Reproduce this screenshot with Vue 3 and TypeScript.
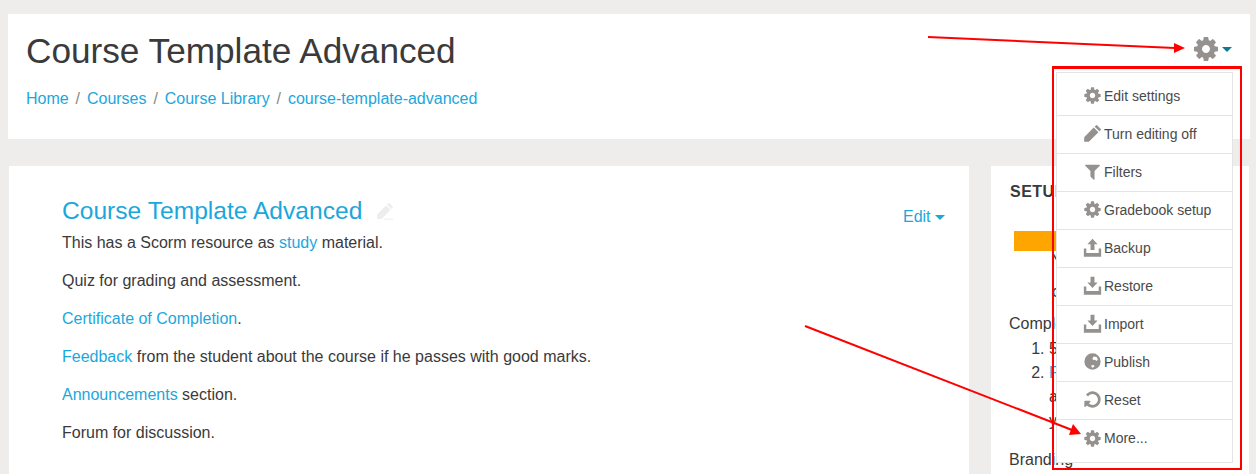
<script setup lang="ts">
const cog = 'M1152 896q0-106-75-181t-181-75-181 75-75 181 75 181 181 75 181-75 75-181zm512-109v222q0 12-8 23t-20 13l-185 28q-19 54-39 91 35 50 107 138 10 12 10 25t-9 23q-27 37-99 108t-94 71q-12 0-26-9l-138-108q-44 23-91 38-16 136-29 186-7 28-36 28h-222q-14 0-24.500-8.500t-11.500-21.500l-28-184q-49-16-90-37l-141 107q-10 9-25 9-14 0-25-11-126-114-165-168-7-10-7-23 0-12 8-23 15-21 51-66.500t54-70.500q-27-50-41-99l-183-27q-13-2-21-12.500t-8-23.500v-222q0-12 8-23t19-13l186-28q14-46 39-92-40-57-107-138-10-12-10-24 0-10 9-23 26-36 98.500-107.500t94.500-71.500q13 0 26 10l138 107q44-23 91-38 16-136 29-186 7-28 36-28h222q14 0 24.500 8.500t11.500 21.500l28 184q49 16 90 37l142-107q9-9 24-9 13 0 25 10 129 119 165 170 7 8 7 22 0 12-8 23-15 21-51 66.500t-54 70.500q26 50 41 98l183 28q13 2 21 12.500t8 23.500z'
const pencil = 'M1330 120l342 342q50 50 0 100l-130 130-442-442 130-130q50-50 100 0zM1010 340l442 442-900 900H110v-442z'
const filter = 'M1595 295q17 41-14 70l-493 493v742q0 42-39 59-13 5-25 5-27 0-45-19l-256-256q-19-19-19-45v-486l-493-493q-31-29-14-70 17-39 59-39h1280q42 0 59 39z'
const upload = 'M80 1000h230v420h1172v-420h230v780H80zM896 60l480 520H1080v560H712V580H416z'
const download = 'M80 1000h230v420h1172v-420h230v780H80zM712 60h368v560h296l-480 520-480-520h296z'
const globe = 'M896 128a768 768 0 1 0 0 1536a768 768 0 0 0 0-1536zM1000 420l300 60 100 250-140 120-120-120-180 30-80-150zM800 1250l220-30 60 130-150 130-130-60z'
const repeat = 'M1664 256v448q0 26-19 45t-45 19h-448q-42 0-59-40-17-39 14-69l138-138q-148-137-349-137-104 0-198.500 40.500t-163.500 109.500-109.500 163.500-40.500 198.500 40.500 198.500 109.500 163.500 163.500 109.500 198.500 40.500q119 0 225-52t179-147q7-10 23-12 15 0 25 9l137 138q9 8 9.500 20.500t-7.500 22.500q-109 132-264 204.500t-327 72.500q-156 0-298-61t-245-164-164-245-61-298 61-298 164-245 245-164 298-61q147 0 284.500 55.500t244.500 156.500l130-129q29-31 70-14 39 17 39 59z'

const crumbs = ['Home', 'Courses', 'Course Library', 'course-template-advanced']
const menu = [
  { label: 'Edit settings', d: cog, flip: false },
  { label: 'Turn editing off', d: pencil, flip: false },
  { label: 'Filters', d: filter, flip: false },
  { label: 'Gradebook setup', d: cog, flip: false },
  { label: 'Backup', d: upload, flip: false },
  { label: 'Restore', d: download, flip: false },
  { label: 'Import', d: download, flip: false },
  { label: 'Publish', d: globe, flip: false },
  { label: 'Reset', d: repeat, flip: true },
  { label: 'More...', d: cog, flip: false }
]
</script>

<template>
  <div class="page">
    <header class="head card">
      <div class="head-main">
        <h1>Course Template Advanced</h1>
        <nav class="crumbs">
          <template v-for="(c, i) in crumbs" :key="c">
            <span v-if="i" class="sep">/</span>
            <a>{{ c }}</a>
          </template>
        </nav>
      </div>
      <div class="cogbtn">
        <svg width="28" height="28" viewBox="0 0 1792 1792"><path :d="cog" fill="#94918e" /></svg>
        <i class="caret teal"></i>
      </div>
    </header>

    <div class="cols">
      <main class="course card">
        <div class="title-row">
          <h2>Course Template Advanced</h2>
          <svg class="edit-pen" width="18" height="18" viewBox="0 0 1792 1792"><path :d="pencil" fill="#eeedec" /><rect x="800" y="1660" width="900" height="100" fill="#eeedec" /></svg>
          <a class="edit">Edit <i class="caret blue"></i></a>
        </div>
        <p>This has a Scorm resource as <a>study</a> material.</p>
        <p>Quiz for grading and assessment.</p>
        <p><a>Certificate of Completion</a>.</p>
        <p><a>Feedback</a> from the student about the course if he passes with good marks.</p>
        <p><a>Announcements</a> section.</p>
        <p>Forum for discussion.</p>
      </main>
      <aside class="side card">
        <h3>SETUP</h3>
        <div class="orange"></div>
        <p class="mid">Your</p>
        <p class="mid low">course</p>
        <p class="comp">Completion</p>
        <ol>
          <li>50%</li>
          <li><a>Feed</a><br />and<br />you</li>
        </ol>
        <p class="brand">Branding</p>
      </aside>
    </div>

    <ul class="menu">
      <li v-for="m in menu" :key="m.label">
        <svg width="19" height="19" viewBox="0 0 1792 1792">
          <path :d="m.d" fill="#94918e" fill-rule="evenodd" :transform="m.flip ? 'rotate(180 896 896)' : undefined" />
        </svg>
        <span>{{ m.label }}</span>
      </li>
    </ul>
    <div class="redbox"></div>

    <svg class="arrows" width="1256" height="474" viewBox="0 0 1256 474">
      <line x1="928" y1="37" x2="1175" y2="48" stroke="#f00" stroke-width="2" />
      <polygon points="1185,48 1174,43 1174,53" fill="#f00" />
      <line x1="805" y1="326" x2="1072" y2="430" stroke="#f00" stroke-width="2" />
      <polygon points="1081,434 1069,435 1073,424" fill="#f00" />
    </svg>
  </div>
</template>

<style>
html, body { margin: 0; background: #eeedec; }
</style>

<style scoped>
.page {
  position: relative;
  width: 1256px;
  height: 474px;
  overflow: hidden;
  padding: 14px 6px 0 8px;
  box-sizing: border-box;
  font-family: "Liberation Sans", Arial, sans-serif;
  font-size: 14.5px;
  color: #3a3a3a;
}
a { color: #1ba7dc; }
.card { background: #fff; }
.head {
  height: 125px;
  display: flex;
  justify-content: space-between;
  padding: 0 18px;
  box-sizing: border-box;
}
h1 {
  margin: 17px 0 0;
  font-size: 35.2px;
  line-height: 40px;
  font-weight: 400;
}
.crumbs { margin-top: 18px; font-size: 16px; line-height: 20px; display: flex; }
.sep { color: #8a8886; margin: 0 6.9px; }
.cogbtn { display: flex; align-items: center; gap: 2px; height: 26px; margin-top: 22px; }
.caret { display: inline-block; width: 0; height: 0; border-left: 5px solid transparent; border-right: 5px solid transparent; border-top: 5px solid; }
.teal { color: #0a7a96; }
.blue { color: #1ba7dc; vertical-align: 2px; }
.cols { display: flex; margin-top: 27px; gap: 22px; align-items: flex-start; }
.course {
  margin-left: 1px;
  width: 960px;
  height: 320px;
  padding: 28px 24px 0 53px;
  box-sizing: border-box;
}
.title-row { display: flex; align-items: center; height: 34px; margin-bottom: 5px; }
h2 { margin: 0; font-size: 24.6px; font-weight: 400; color: #1ba7dc; line-height: 34px; }
.edit-pen { margin-left: 14px; }
.edit { margin-left: auto; font-size: 16px; padding-top: 12px; }
.course p { margin: 0 0 19px; line-height: 19px; font-size: 16px; }
.side {
  width: 258px;
  height: 320px;
  padding: 16px 0 0 19px;
  box-sizing: border-box;
  font-size: 16px;
}
h3 { margin: 0; font-size: 16px; line-height: 20px; font-weight: 700; letter-spacing: .5px; }
.orange { margin: 29px 0 0 4px; width: 90px; height: 20px; background: #ffa500; }
.mid, .comp, .brand { margin: 0; }
.mid { padding-left: 42px; line-height: 19px; }
.low { margin-top: 12px; }
.comp { margin: 13px 0 0 -1px; line-height: 19px; }
ol { margin: 4px 0 0; padding: 0 0 0 39px; line-height: 24px; }
.brand { margin: 17px 0 0 -1px; line-height: 19px; }
.menu {
  position: absolute;
  left: 1056px;
  top: 72px;
  width: 177px;
  height: 391px;
  margin: 0;
  padding: 0;
  list-style: none;
  background: #fff;
  border: 1px solid #e4e4e4;
  box-sizing: border-box;
}
.menu li {
  height: 38px;
  display: flex;
  align-items: center;
  gap: 2px;
  padding: 0 0 2px 26px;
  box-sizing: border-box;
  border-bottom: 1px solid #e4e4e4;
  font-size: 14px;
  color: #4a4a4a;
}
.menu li:first-child { height: 43px; padding-top: 3px; padding-bottom: 0; }
.menu li:last-child { height: 42px; border-bottom: 0; padding-bottom: 6px; }
.redbox {
  position: absolute;
  left: 1052px;
  top: 66px;
  width: 190px;
  height: 404px;
  border: 2px solid #f00;
  border-top-width: 3px;
  box-sizing: border-box;
}
.arrows { position: absolute; left: 0; top: 0; }
</style>
